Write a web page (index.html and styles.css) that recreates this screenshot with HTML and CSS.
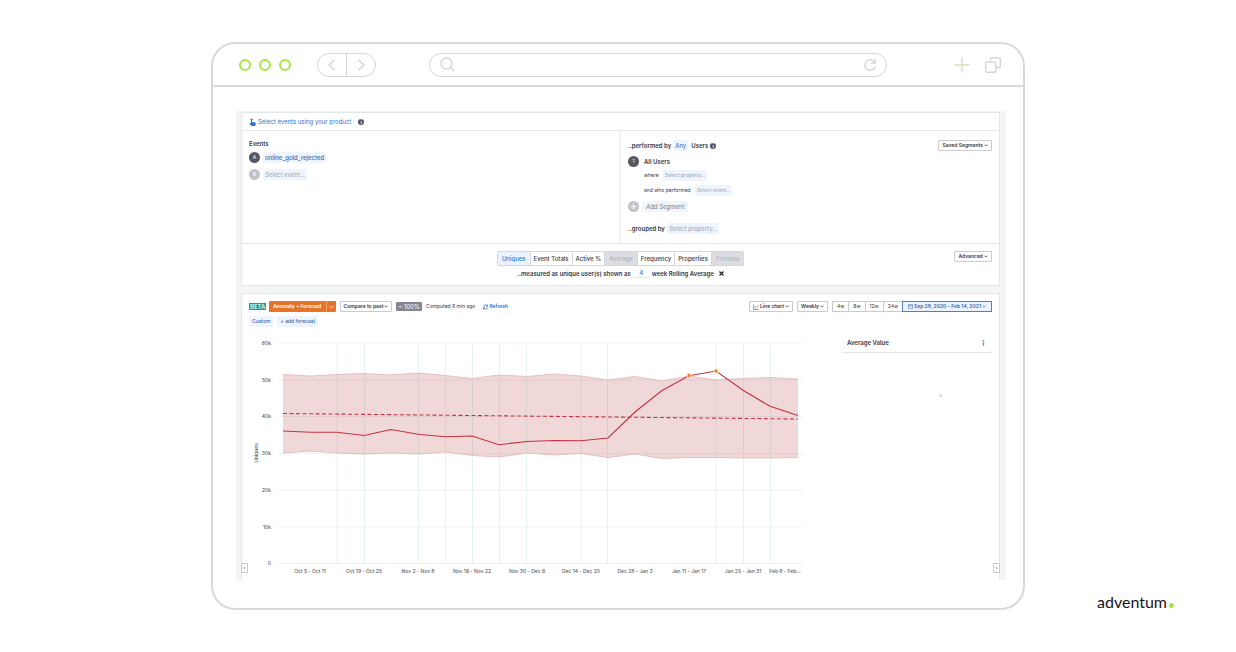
FILE: index.html
```html
<!DOCTYPE html>
<html lang="en">
<head>
<meta charset="utf-8">
<meta name="viewport" content="width=device-width, initial-scale=1">
<title>Event chart</title>
<link rel="stylesheet" href="styles.css">
</head>
<body>
<main class="stage">
  <section class="browser">
    <header class="chrome">
      <div class="dots"><i></i><i></i><i></i></div>
      <nav class="history">
        <button aria-label="Back"><svg width="8" height="12" viewBox="0 0 8 12"><path d="M6.500 .8 1 6l5.500 5.200"/></svg></button>
        <button aria-label="Forward"><svg width="8" height="12" viewBox="0 0 8 12"><path d="M1.500 .8 7 6l-5.500 5.200"/></svg></button>
      </nav>
      <div class="address">
        <svg width="15" height="15" viewBox="0 0 15 15"><circle cx="6.500" cy="6.500" r="5.500"/><path d="m10.500 10.500 3.500 3.500"/></svg>
        <input type="text" aria-label="Address">
        <button class="plain" aria-label="Reload"><svg width="14" height="14" viewBox="0 0 14 14"><path d="M11.500 4A5.300 5.300 0 1 0 12.200 8.500M12.300 1v4H8.300"/></svg></button>
      </div>
      <button class="plain add" aria-label="New tab"><svg width="16" height="16" viewBox="0 0 16 16"><path class="plus-h" d="M.5 8h15"/><path d="M8 .5v15"/></svg></button>
      <button class="plain copy" aria-label="Tabs"><svg width="16" height="16" viewBox="0 0 16 16"><rect x=".7" y="5" width="10" height="10.300" rx="1.500"/><path d="M5.500 5V2.200Q5.500.7 7 .7h6.800q1.500 0 1.500 1.500V9q0 1.500-1.500 1.500h-3"/></svg></button>
    </header>

    <div class="viewport">
      <div class="app">
        <section class="card query">
          <div class="intro">
            <svg width="7" height="8" viewBox="0 0 7 8"><path fill="#2c72d8" d="M2 1.200Q2.600.5 3.200 1.200V4l3 .6q.7.200.6 1L6.300 8H2.500L.3 5.400q.2-.7 1-.5L2 5.200Z"/><path fill="none" stroke="#2c72d8" stroke-width=".5" d="M1 2A1.700 1.700 0 0 1 4.200 2"/></svg>
            <a href="#events">Select events using your product</a>
            <span class="info">i</span>
          </div>
          <div class="builder">
            <div class="events">
              <h2>Events</h2>
              <div class="line"><span class="badge">A</span><button class="chip event">online_gold_rejected</button></div>
              <div class="line"><span class="badge off">B</span><button class="chip hint">Select event...</button></div>
            </div>
            <div class="segments">
              <div class="line who"><b>..performed by</b><button class="chip any">Any</button><b>Users</b><span class="info">i</span><button class="btn saved">Saved Segments <svg class="caret" width="4" height="3" viewBox="0 0 4 3"><path d="m.5.8 1.500 1.200L3.500.8"/></svg></button></div>
              <div class="line all"><span class="badge">1</span><b>All Users</b></div>
              <div class="line cond where"><span>where</span><button class="chip small hint">Select property...</button></div>
              <div class="line cond did"><span>and who performed</span><button class="chip small hint">Select event...</button></div>
              <div class="line extra"><span class="badge off"><svg width="7" height="7" viewBox="0 0 7 7"><path stroke="#fff" d="M3.500.5v6M.5 3.500h6"/></svg></span><button class="chip segment">Add Segment</button></div>
              <div class="line group"><b>..grouped by</b><button class="chip hint prop">Select property...</button></div>
            </div>
          </div>
          <div class="measure">
            <div class="center">
              <div class="tabs">
                <button class="on">Uniques</button><button>Event Totals</button><button>Active %</button><button class="off" disabled>Average</button><button>Frequency</button><button>Properties</button><button class="off" disabled>Formula</button>
              </div>
              <div class="rolling"><label for="weeks">..measured as unique user(s) shown as</label><input id="weeks" type="text" value="4"><b>week Rolling Average</b><button class="plain" aria-label="Remove"><svg width="5" height="5" viewBox="0 0 5 5"><path stroke="#222" stroke-width="1.200" d="m.5.5 4 4m0-4-4 4"/></svg></button></div>
            </div>
            <button class="btn advanced">Advanced <svg class="caret" width="4" height="3" viewBox="0 0 4 3"><path d="m.5.8 1.500 1.200L3.500.8"/></svg></button>
          </div>
        </section>

        <section class="card report">
          <div class="tools">
            <span class="beta">BETA</span>
            <div class="anomaly"><button>Anomaly + Forecast</button><button aria-label="Anomaly options"><svg width="5" height="4" viewBox="0 0 5 4"><path stroke="#fff" stroke-width=".8" d="m.5 1 2 1.800 2-1.800"/></svg></button></div>
            <button class="btn">Compare to past <svg class="caret" width="4" height="3" viewBox="0 0 4 3"><path d="m.5.8 1.500 1.200L3.500.8"/></svg></button>
            <span class="sample">~ 100%</span>
            <span class="computed">Computed 9 min ago</span>
            <a class="refresh" href="#refresh"><svg width="5" height="6" viewBox="0 0 5 6"><path stroke="#2c72d8" stroke-width=".8" d="M.5 2.500A2 2 0 0 1 4.300 2M4.600.5V2.300H3M4.500 3.500A2 2 0 0 1 .7 4M.4 5.500V3.700H2"/></svg>Refresh</a>
            <div class="right">
              <button class="btn"><svg width="6" height="6" viewBox="0 0 6 6"><path stroke="#555" stroke-width=".6" d="M.4.5v5h5.400M1.200 4l1.300-1.200.8.600L5.500 1.500"/></svg>Line chart <svg class="caret" width="4" height="3" viewBox="0 0 4 3"><path d="m.5.8 1.500 1.200L3.500.8"/></svg></button>
              <button class="btn">Weekly <svg class="caret" width="4" height="3" viewBox="0 0 4 3"><path d="m.5.8 1.500 1.200L3.500.8"/></svg></button>
              <div class="range">
                <button>4w</button><button>8w</button><button>12w</button><button>24w</button>
                <button class="date"><svg width="5" height="5" viewBox="0 0 5 5"><path stroke="#3d68ad" stroke-width=".6" d="M.3.700h4.400v4H.3zM.3 1.900h4.400"/></svg>Sep 28, 2020 - Feb 14, 2021 <svg class="caret" width="4" height="3" viewBox="0 0 4 3"><path d="m.5.8 1.500 1.200L3.500.8"/></svg></button>
              </div>
            </div>
          </div>
          <div class="forecast"><button class="chip small">Custom</button><button class="chip small">+ add forecast</button></div>
          <div class="plot">
            <svg class="chart" viewBox="242 327 568 253" role="img" aria-label="Weekly uniques">
              <path class="col" d="M337 343V564M364.500 343V564M418.500 343V564M445.500 343V564M472.500 343V564M499.500 343V564M526.500 343V564M581 343V564M607.500 343V564M716 343V564M743.500 343V564M770.500 343V564"/>
              <path class="row" d="M278 343H803M278 380H803M278 416.500H803M278 453.500H803M278 490H803M278 527H803M278 563.500H803"/>
              <path class="band" d="M283 374.500 310 376 337 374.500 364 373.500 391 375 418 373 445 375.500 472 378.500 499 375 527 376.500 554 374 581 376 608 380 635 376.500 662 381 689 376 716 380 743 378.500 770 377.500 798 379V457.500L770 458 743 458 716 457.500 689 457.500 662 458.500 635 454 608 457.500 581 453.500 554 455 527 453 499 457 472 455.500 445 452 418 454 391 453 364 454 337 453 310 451 283 453Z"/>
              <path class="edge" d="M283 374.500 310 376 337 374.500 364 373.500 391 375 418 373 445 375.500 472 378.500 499 375 527 376.500 554 374 581 376 608 380 635 376.500 662 381 689 376 716 380 743 378.500 770 377.500 798 379M798 457.500 770 458 743 458 716 457.500 689 457.500 662 458.500 635 454 608 457.500 581 453.500 554 455 527 453 499 457 472 455.500 445 452 418 454 391 453 364 454 337 453 310 451 283 453"/>
              <path class="trend" d="M283 413.500 798 419"/>
              <path class="value" d="M283 431 310 432.300 337 432.300 364 435.500 391 429.500 418 434.200 445 436.800 472 436 499 444.700 527 441.500 554 440.500 581 440.700 608 438 635 412 662 390.500 689 375.700 716 371 743 390.300 770 406.300 798 415.500"/>
              <g class="peak"><circle cx="689" cy="375.700" r="2"/><circle cx="716" cy="371" r="2"/></g>
              <g class="ylab"><text x="271" y="345">60k</text><text x="271" y="382">50k</text><text x="271" y="418">40k</text><text x="271" y="455">30k</text><text x="271" y="492">20k</text><text x="271" y="529">10k</text><text x="271" y="565">0</text></g>
              <g class="xlab"><text x="310" y="573">Oct 5 - Oct 11</text><text x="364" y="573">Oct 19 - Oct 25</text><text x="418" y="573">Nov 2 - Nov 8</text><text x="472" y="573">Nov 16 - Nov 22</text><text x="527" y="573">Nov 30 - Dec 6</text><text x="581" y="573">Dec 14 - Dec 20</text><text x="635" y="573">Dec 28 - Jan 3</text><text x="689" y="573">Jan 11 - Jan 17</text><text x="743" y="573">Jan 25 - Jan 31</text><text x="785" y="573">Feb 8 - Feb...</text></g>
              <text class="axis" transform="translate(258 453) rotate(-90)">Uniques</text>
            </svg>
            <aside class="summary">
              <div class="head"><h2>Average Value</h2><button class="plain" aria-label="More"><svg width="3" height="6" viewBox="0 0 3 6"><path stroke="#4d94ee" stroke-width="1.400" d="M1.500 0v1.400M1.500 2.200v3.400"/></svg></button></div>
              <svg class="loading" width="4" height="4" viewBox="0 0 4 4"><path stroke="#999" stroke-width=".8" d="M1 .5q0 2 2 2.500"/></svg>
            </aside>
            <button class="handle left" aria-label="Previous">‹</button>
            <button class="handle next" aria-label="Next">›</button>
          </div>
        </section>
      </div>
    </div>
  </section>
  <footer class="brand">adventum<i></i></footer>
</main>
</body>
</html>
```
FILE: styles.css
```css
* { box-sizing: border-box; }
body { margin: 0; background: #fff; color: #36383f; font: 6px/9px Inter, sans-serif; }
button, input { font: inherit; color: inherit; margin: 0; padding: 0; border: 0; background: none; }
button { white-space: nowrap; }
svg { display: block; fill: none; flex: none; }
h2 { margin: 0; font: 600 6px/9px Inter, sans-serif; }
b { font-weight: 600; }
a { color: #2c72d8; text-decoration: none; }
.plain { display: flex; align-items: center; justify-content: center; }

.stage { display: grid; grid-template-columns: 211px minmax(0, 1fr) 211px; padding: 42px 0; }
.browser { grid-column: 2; border: 2px solid #d9d9d9; border-radius: 24px; }
.chrome { display: flex; align-items: center; height: 43px; padding: 0 22px 0 26px; border-bottom: 2px solid #d9d9d9; }
.chrome svg { stroke: #d6d6d6; stroke-width: 1.400; }
.dots { display: flex; gap: 8px; }
.dots i { width: 12px; height: 12px; border: 2px solid #a5e73f; border-radius: 50%; }
.history { display: flex; height: 24px; margin-left: 26px; border: 1px solid #d6d6d6; border-radius: 12px; }
.history button { display: flex; align-items: center; justify-content: center; width: 28px; }
.history button + button { width: 29px; border-left: 1px solid #d6d6d6; }
.address { display: flex; align-items: center; flex: 1; height: 24px; margin: 0 67px 0 53px; padding: 0 9px 0 10px; border: 1px solid #d6d6d6; border-radius: 12px; }
.address input { flex: 1; min-width: 0; outline: 0; font-size: 12px; }
.copy { margin-left: 15px; }
.chrome .plus-h { stroke: #cfe3a8; }

.viewport { padding: 24px 17px 28px 23px; }
.app { display: flex; flex-direction: column; gap: 7px; padding: 1px 6px 0 5px; background: #f4f5f7; }
.card { background: #fff; border: 1px solid #e4e7ea; }

.intro { display: flex; align-items: center; height: 18px; padding-left: 7px; border-bottom: 1px solid #e4e7ea; }
.intro a { margin: 0 7px 0 2px; }
.info { width: 6px; height: 6px; border-radius: 50%; background: #50525e; color: #fff; font-size: 5px; line-height: 6px; font-weight: 700; text-align: center; }
.builder { display: grid; grid-template-columns: 377fr 380fr; border-bottom: 1px solid #e0e2e5; }
.events { padding: 8px 7px; }
.events h2 { margin-bottom: 4px; }
.events .line + .line { margin-top: 6px; }
.event { font-weight: 500; }
.segments { padding: 9px 7px; border-left: 2px solid #f1f3f5; }
.line { display: flex; align-items: center; height: 11px; }
.badge { display: flex; align-items: center; justify-content: center; width: 11px; height: 11px; margin-right: 3px; border-radius: 50%; background: #555762; color: #fff; font-size: 5px; }
.badge.off { background: #c2c3c8; }
.chip { height: 11px; padding: 0 2px; border-radius: 1px; background: #eff5fe; color: #3d68ad; }
.small { font-size: 5px; }
.hint, .segment { color: #9aa3b5; font-style: italic; }
.segment { padding: 0 4px; color: #767f90; }
.any { margin: 0 3px 0 0; }
.who b { margin-right: 2px; }
.saved { margin-left: auto; }
.all { margin-top: 5px; }
.all b { margin-left: 2px; }
.cond { padding-left: 16px; gap: 4px; font-size: 5px; }
.where { margin-top: 3px; }
.did { margin-top: 4px; }
.extra { margin-top: 5px; }
.group { margin-top: 11px; gap: 2px; }
.btn { display: flex; align-items: center; gap: 1px; height: 11px; padding: 0 3px; border: 1px solid #c9cbd0; border-radius: 1px; background: #fff; font-size: 5px; line-height: 9px; font-weight: 600; }
.caret { stroke: currentColor; stroke-width: 0.700; }

.measure { display: grid; grid-template-columns: 1fr auto 1fr; padding: 7px 7px 5px; }
.center { grid-column: 2; }
.advanced { justify-self: end; }
.tabs { display: flex; height: 15px; border: 1px solid #d5d7dc; border-radius: 2px; }
.tabs button { flex: auto; padding: 0 3px; font-weight: 500; }
.tabs button + button { border-left: 1px solid #d5d7dc; }
.tabs .on { padding: 0 4px; background: #eaf3ff; color: #2c7be5; }
.tabs .off { padding: 0 4px; background: #dcdde2; color: #b2b4bb; }
.rolling { display: flex; align-items: center; justify-content: center; height: 14px; font-weight: 600; }
.rolling input { width: 17px; height: 9px; margin: 0 2px; border-bottom: 1px solid #e1e9f4; color: #2c7be5; font-weight: 500; text-align: center; }
.rolling .plain { margin-left: 5px; }

.report { border-bottom: 0; }
.tools { display: flex; align-items: center; height: 11px; margin: 7px 7px 0; font-size: 5px; }
.beta { padding: 0 1px; background: #249d8b; color: #fff; font-size: 6px; font-weight: 500; line-height: 7px; }
.anomaly { display: flex; height: 11px; margin: 0 4px 0 3px; border-radius: 1px; background: #e87427; color: #fff; font-weight: 600; }
.anomaly button { padding: 0 4px; }
.anomaly button + button { padding: 0 2px; border-left: 1px solid #f3a672; }
.sample { margin: 0 4px; padding: 0 2px; border-radius: 1px; background: #858693; color: #fff; font-size: 6px; }
.refresh { display: flex; align-items: center; gap: 1px; margin-left: 8px; font-weight: 600; }
.right { display: flex; gap: 4px; margin-left: auto; }
.range { display: flex; }
.range button { display: flex; align-items: center; gap: 1px; height: 11px; padding: 0 4px; border: 1px solid #c9cbd0; border-right: 0; }
.range .date { padding: 0 5px; border: 1px solid #557fbd; background: #eaf3ff; color: #3d68ad; font-weight: 600; }
.forecast { display: flex; gap: 4px; margin: 4px 7px 0; }
.forecast .chip { padding: 0 3px; font-weight: 500; }
.plot { position: relative; display: grid; grid-template-columns: minmax(0, 1fr) 189px; }
.chart { width: 100%; height: auto; }
.col { stroke: #e6f2f0; }
.row { stroke: #ecedef; stroke-width: 0.800; }
.band { fill: rgba(170, 40, 45, 0.180); }
.edge { stroke: #e3b4b8; stroke-width: 0.800; }
.value { stroke: #c43340; stroke-width: 1.100; }
.trend { stroke: #c43340; stroke-width: 1.100; stroke-dasharray: 4 2.500; }
.peak { fill: #e87427; stroke: #f9d9a9; stroke-width: 1.200; }
.chart text { fill: #5f6168; font-size: 5px; font-weight: 500; }
.ylab { text-anchor: end; }
.xlab, .axis { text-anchor: middle; }
.summary { padding: 11px 7px 0 32px; }
.head { display: flex; align-items: center; justify-content: space-between; height: 15px; padding: 0 7px 5px 5px; border-bottom: 1px solid #e4e7ea; }
.loading { margin: 41px 0 0 97px; }
.handle { position: absolute; bottom: 7px; width: 7px; height: 10px; border: 1px solid #c9cbd0; background: #fff; font-size: 5px; line-height: 8px; }
.left { left: -1px; }
.next { right: -1px; }

.brand { display: flex; align-items: baseline; align-self: end; grid-column: 3; padding-left: 72px; color: #151515; font: 16px/16px Lato, sans-serif; }
.brand i { width: 5px; height: 5px; margin-left: 2px; border-radius: 50%; background: #a5e73f; }
```
